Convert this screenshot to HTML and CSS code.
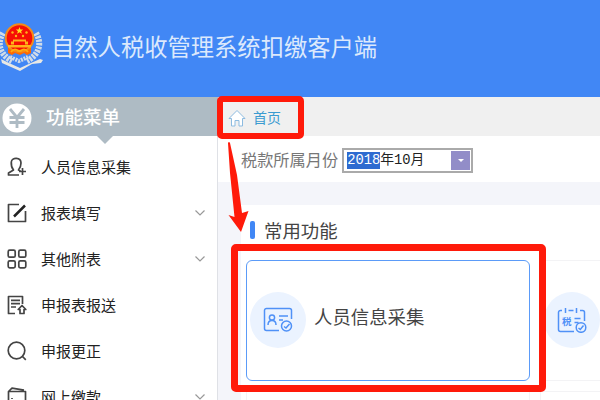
FILE: index.html
```html
<!DOCTYPE html>
<html lang="zh-CN">
<head>
  <meta charset="UTF-8" />
  <meta name="viewport" content="width=device-width, initial-scale=1.0"/>
  <title>自然人税收管理系统扣缴客户端</title>
  <link rel="stylesheet" href="styles.css">
</head>
<body>
  <header class="header">
    <svg class="emblem" width="44" height="52" viewBox="0 0 44 52">
      <g fill="none" stroke="#cfdbe8" stroke-linecap="butt">
        <path d="M3 12C-3 22-1 33 12 40M36 12c6 10 4 21-9 28" stroke-width="6" stroke-dasharray="2.500 1"/>
        <path d="M10 36l9 4 9-4" stroke-width="4" stroke-dasharray="2 1"/>
      </g>
      <path d="M1 38l8 4 11 5 11-5 9-4 3 1-2 3-9 1-12 7-18-8z" fill="#e8e8e4"/>
      <path d="M8 25h23v7l-4 2-3-2-4 2-5-2-3 2-4-2z" fill="#ff6a00"/>
      <circle cx="19.500" cy="17" r="13.800" fill="#f60f05" stroke="#f58a18" stroke-width="2"/>
      <path d="M19.500 6l1 2.500h2.600l-2 1.700.8 2.600-2.400-1.600-2.400 1.600.8-2.600-2-1.700h2.600z" fill="#ffdf20"/>
      <g fill="#ffb41a">
        <circle cx="12.500" cy="11.500" r="1.200"/><circle cx="26.500" cy="11.500" r="1.200"/>
        <circle cx="16" cy="15" r="1.200"/><circle cx="23" cy="15" r="1.200"/>
        <path d="M13 18.500h13v2h-13zM11 20.500h3v3h-3zM25 20.500h3v3h-3zM8 24h23v2.500H8z"/>
      </g>
      <path d="M11 31q3-4 6-2 2.500 2 5 0 3-2 6 2" fill="none" stroke="#ffae0c" stroke-width="1.800"/>
    </svg>
    <h1>自然人税收管理系统扣缴客户端</h1>
  </header>

  <div class="layout">
    <nav class="sidebar">
      <div class="menu-title">
        <svg width="30" height="30" viewBox="0 0 30 30">
          <circle cx="15" cy="15" r="14.500" fill="#fff"/>
          <path d="M8 6l7 8.500L22 6M15 14v11M7.500 14.500h15M7.500 19.500h15" fill="none" stroke="#aebbc4" stroke-width="2.800"/>
        </svg>
        <span>功能菜单</span>
      </div>
      <ul class="menu">
        <li>
          <svg class="icon" viewBox="0 0 20 20"><path d="M12 18H1.500v-2l5-3C4.500 10.500 4 8 4.300 5 4.800 0 14 0 14 6c0 3-.8 5-2.500 7l2 1M15.500 11v7M12 14.500h7"/></svg>
          <span>人员信息采集</span>
        </li>
        <li>
          <svg class="icon" viewBox="0 0 20 20"><path d="M12 1.500H1.500v17h17V8"/><path class="pen" d="M7 13.500L18 2.500"/></svg>
          <span>报表填写</span>
          <svg class="chevron" viewBox="0 0 10 6"><path d="M.5.500L5 5 9.500.500"/></svg>
        </li>
        <li>
          <svg class="icon" viewBox="0 0 20 20"><rect x="1.200" y="1.200" width="7" height="7" rx="1.500"/><rect x="11.800" y="1.200" width="7" height="7" rx="1.500"/><rect x="1.200" y="11.800" width="7" height="7" rx="1.500"/><rect x="11.800" y="11.800" width="7" height="7" rx="1.500"/></svg>
          <span>其他附表</span>
          <svg class="chevron" viewBox="0 0 10 6"><path d="M.5.500L5 5 9.500.500"/></svg>
        </li>
        <li>
          <svg class="icon" viewBox="0 0 20 20"><path d="M8 18.500H1.500v-17h14V9M4 5.300h9M4 8.700h9M4 12h5M15 10.500l-3.800 4H13v4h4v-4h1.800z"/></svg>
          <span>申报表报送</span>
        </li>
        <li>
          <svg class="icon" viewBox="0 0 20 20"><circle cx="9.500" cy="9.500" r="8.300"/><path d="M15.500 15.500l3.300 3.300"/></svg>
          <span>申报更正</span>
        </li>
        <li>
          <svg class="icon" viewBox="0 0 20 20"><path d="M1.500 4.500h17v14h-17zM1.500 4.500L5 1.200l12 2M5 11v1"/></svg>
          <span>网上缴款</span>
          <svg class="chevron" viewBox="0 0 10 6"><path d="M.5.500L5 5 9.500.500"/></svg>
        </li>
      </ul>
    </nav>

    <main class="main">
      <div class="tabs">
        <svg width="18" height="18" viewBox="0 0 18 18"><path d="M1 9.500L9 1.500l8 8h-2.500V17H11v-5.500H7V17H3.500V9.500z" fill="#fff" stroke="#8dbbe0" stroke-linejoin="round"/></svg>
        <span>首页</span>
      </div>
      <div class="filter">
        <label>税款所属月份</label>
        <div class="month"><span class="selected">2018</span><span>年10月</span><i class="drop"></i></div>
      </div>
      <section class="panel">
        <h2>常用功能</h2>
        <div class="cards">
          <div class="card active">
            <div class="round">
              <svg width="30" height="26" viewBox="0 0 30 26">
                <path d="M16 23.500H3.500a2 2 0 0 1-2-2v-18a2 2 0 0 1 2-2h23a2 2 0 0 1 2 2V12"/>
                <circle cx="9" cy="10.500" r="2.600"/><path d="M5 18c0-6 8-6 8 0M16 9h9M16 13h4"/>
                <circle cx="23.500" cy="19" r="5"/><path d="M21 19.500l2 1.500 3.500-4"/>
              </svg>
            </div>
            <span>人员信息采集</span>
          </div>
          <div class="card">
            <div class="round">
              <svg width="30" height="26" viewBox="0 0 30 26">
                <path d="M17 24.500H3.500a2 2 0 0 1-2-2v-17a2 2 0 0 1 2-2H5M8.500 1v5M11.500 3.500h5M19.500 1v5M23 3.500h2.500a2 2 0 0 1 2 2V14M17.500 11.500h6M17.500 15.500h4"/>
                <circle cx="24" cy="20.500" r="4.800"/><path d="M21.500 21l1.800 1.500 3.200-4"/>
                <text x="5" y="18">税</text>
              </svg>
            </div>
          </div>
          <div class="card"></div>
          <div class="card"></div>
        </div>
      </section>
    </main>
  </div>

  <!-- guide marks -->
  <div class="mark mark-tab"></div>
  <div class="mark mark-card"></div>
  <svg class="arrow" width="24" height="94" viewBox="0 0 24 94"><path d="M2 3Q3 1 4 3L11 35 16 73l6.500-2L15 92 2.500 75l6 2L4 33z" fill="#ff1a0a"/></svg>
</body>
</html>
```

FILE: styles.css
```css
* {
  box-sizing: border-box;
}

body {
  font-family: "Noto Sans CJK SC", sans-serif;
  margin: 0;
  height: 400px;
  overflow: hidden;
  background: #f4f5fa;
  color: #222;
}

h1, h2, ul {
  margin: 0;
  padding: 0;
  font-weight: normal;
}

.header {
  height: 97px;
  background: #4187f5;
  display: flex;
  align-items: center;
  gap: 7px;
}

.emblem {
  margin-top: -3px;
}

.header h1 {
  color: #dce9fc;
  font-size: 23.3px;
  font-weight: 400;
  line-height: 30px;
  white-space: nowrap;
  margin-top: -6px;
}

.layout {
  display: flex;
  height: 303px;
}

.sidebar {
  width: 218px;
  flex: none;
  background: #fff;
  border-right: 1px solid #dfe1e6;
}

.menu-title {
  width: 218px;
  height: 39px;
  background: #aebbc4;
  display: flex;
  align-items: center;
  padding: 0 0 0 2px;
  gap: 14px;
  color: #fff;
  font-size: 18.5px;
  font-weight: 500;
  position: relative;
}

.menu-title svg {
  margin-top: 2px;
}

.menu-title span {
  margin-top: -1px;
}

/* pointer under the menu title */
.menu-title::after {
  content: "";
  position: absolute;
  left: 97px;
  top: 39px;
  border: 8px solid transparent;
  border-top-color: #aebbc4;
  border-bottom: 0;
}

.menu {
  list-style: none;
  padding-top: 8px;
}

.menu li {
  height: 46px;
  display: flex;
  align-items: center;
  padding: 0 12px 0 7px;
  font-size: 15px;
}

.menu span {
  margin: -2px 0 0 14px;
}

.icon {
  width: 20px;
  height: 20px;
  fill: none;
  stroke: #444;
  stroke-width: 1.7;
  stroke-linejoin: round;
}

.icon .pen {
  stroke: #222;
  stroke-width: 2.5;
}

.chevron {
  width: 10px;
  height: 6px;
  margin-left: auto;
  fill: none;
  stroke: #999;
  stroke-width: 1.2;
}

.main {
  flex: 1;
  min-width: 0;
}

.tabs {
  height: 39px;
  background: #f0f0f0;
  display: flex;
  align-items: center;
  gap: 7px;
  padding: 3px 0 0 10px;
  color: #3b9bd0;
  font-size: 14px;
}

.tabs span {
  margin-top: -2px;
}

.filter {
  height: 46px;
  background: #fff;
  display: flex;
  align-items: center;
  gap: 4px;
  padding: 2px 0 0 23px;
  color: #777;
  font-size: 16.2px;
}

.filter label {
  margin-top: -2px;
}

.month {
  width: 131px;
  height: 25px;
  border: 2px solid #aaa;
  display: flex;
  align-items: center;
  padding-left: 3px;
  color: #222;
  font-family: "Liberation Mono", "Noto Sans CJK SC", monospace;
  font-size: 13.8px;
  line-height: 17px;
}

.selected {
  background: #2e6bd0;
  color: #fff;
}

.drop {
  width: 19px;
  height: 19px;
  margin-left: auto;
  margin-right: 1px;
  background: #928dc8;
  display: flex;
  align-items: center;
  justify-content: center;
}

.drop::after {
  content: "";
  border: 3px solid transparent;
  border-top-color: #fff;
  border-bottom: 0;
}

.panel {
  margin: 23px 0 0 23px;
  height: 195px;
  background: #fff;
  padding: 12px 0 0 5px;
  overflow: hidden;
}

.panel h2 {
  display: flex;
  align-items: center;
  gap: 9px;
  height: 26px;
  margin-left: 4px;
  color: #444;
  font-size: 18.4px;
}

.panel h2::before {
  content: "";
  width: 5px;
  height: 18px;
  margin-top: -1px;
  border-radius: 2px;
  background: #4187f5;
}

.cards {
  display: grid;
  grid-template-columns: 284px 284px;
  grid-auto-rows: 121px;
  gap: 10px;
  margin-top: 17px;
}

.card {
  display: flex;
  align-items: center;
  gap: 8px;
  padding-left: 4px;
  border: 1px solid #f3f3f5;
  color: #444;
  font-size: 18.4px;
}

.card.active {
  border-color: #5b9bf8;
  border-radius: 6px;
}

.card span {
  margin-top: -9px;
}

.round {
  width: 56px;
  height: 56px;
  margin: -2px 0 0 -1px;
  border-radius: 50%;
  background: #ebf3ff;
  display: flex;
  align-items: center;
  justify-content: center;
}

.round svg {
  fill: none;
  stroke: #4f91f7;
  stroke-width: 1.5;
}

.round text {
  fill: #4f91f7;
  stroke: none;
  font-size: 9.5px;
  font-weight: bold;
}

.mark {
  position: absolute;
  border: 6px solid #ff1a0a;
  border-radius: 5px;
}

.mark-tab {
  left: 217px;
  top: 96px;
  width: 87px;
  height: 43px;
}

.mark-card {
  left: 231px;
  top: 244px;
  width: 315px;
  height: 148px;
  border-width: 7px;
}

.arrow {
  position: absolute;
  left: 226px;
  top: 140px;
}
```
